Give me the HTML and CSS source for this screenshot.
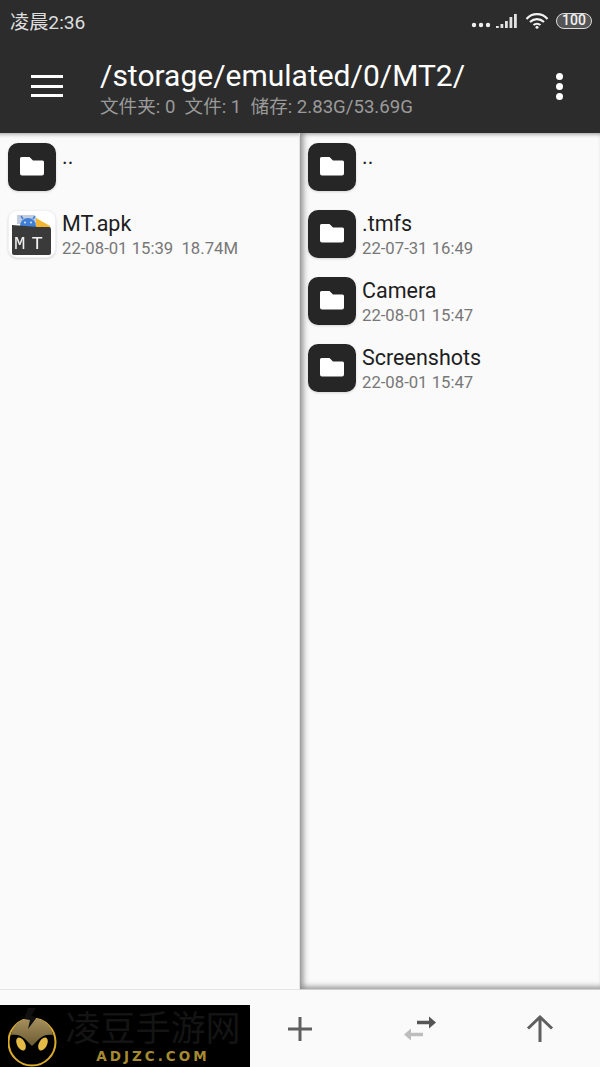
FILE: index.html
```html
<!DOCTYPE html>
<html lang="zh">
<head>
<meta charset="utf-8">
<title>MT2</title>
<link rel="stylesheet" href="styles.css">
</head>
<body>
<svg class="defs" width="0" height="0" aria-hidden="true">
  <symbol id="folder" viewBox="0 0 48 48">
    <rect width="48" height="48" rx="10" fill="#262626"/>
    <path d="M12 15.500a1.500 1.500 0 0 1 1.500-1.500h8l3.500 3.500h9.500a1.500 1.500 0 0 1 1.500 1.500v11.500a2 2 0 0 1-2 2h-20a2 2 0 0 1-2-2z" fill="#fff"/>
  </symbol>
</svg>
<div class="screen">
  <header class="header">
    <div class="status">
      <span class="clock">凌晨2:36</span>
      <div class="status-icons">
        <svg class="ic-dots" width="20" height="6" viewBox="0 0 20 6"><circle cx="3" cy="3" r="2.200" fill="#eee"/><circle cx="10" cy="3" r="2.200" fill="#eee"/><circle cx="17" cy="3" r="2.200" fill="#eee"/></svg>
        <svg class="ic-signal" width="22" height="16" viewBox="0 0 22 16"><path d="M1 13h2.800v2H1zM5.500 11h2.800v4H5.500zM10 8h2.800v7H10zM14.500 4h2.800v11h-2.800zM19 1h2.800v14H19z" fill="#e2e2e2"/></svg>
        <svg class="ic-wifi" width="24" height="17" viewBox="0 0 24 17" fill="none" stroke="#f2f2f2" stroke-width="2.200"><path d="M1.500 7C7 .5 17 .5 22.500 7"/><path d="M5 10c4-3.800 10-3.800 14 0"/><path d="M8.500 13c2-1.700 5-1.700 7 0"/><circle cx="12" cy="15.300" r="1.500" fill="#f2f2f2" stroke="none"/></svg>
        <span class="battery"><span class="battery-text">100</span></span>
      </div>
    </div>
    <div class="toolbar">
      <button class="menu" aria-label="菜单"><span></span><span></span><span></span></button>
      <div class="path">
        <div class="path-title">/storage/emulated/0/MT2/</div>
        <div class="path-info">文件夹: 0&nbsp; 文件: 1&nbsp; 储存: 2.83G/53.69G</div>
      </div>
      <div class="more"><span></span><span></span><span></span></div>
    </div>
  </header>

  <main class="panels">
    <section class="panel panel-left">
      <div class="row">
        <svg class="icon" width="48" height="48"><use href="#folder"/></svg>
        <div class="meta"><div class="name">..</div></div>
      </div>
      <div class="row">
        <svg class="icon" width="48" height="48" viewBox="0 0 48 48">
          <rect x="0.500" y="0.500" width="47" height="47" rx="9" fill="#fff" stroke="#f1f1f1"/>
          <path d="M9 5h17l8 9H9z" fill="#c3cddf"/>
          <path d="M28 8l14 8v6H28z" fill="#f2b632"/>
          <path d="M12 16a8 8 0 0 1 16 0v4H12z" fill="#3f7fd6"/>
          <path d="M15 9l-2-3M25 9l2-3" stroke="#3f7fd6" stroke-width="1.500"/>
          <circle cx="17" cy="12.500" r="1" fill="#dbe6f7"/><circle cx="23" cy="12.500" r="1" fill="#dbe6f7"/>
          <path d="M4 15l26 2h11a2 2 0 0 1 2 2v24a2 2 0 0 1-2 2H6a2 2 0 0 1-2-2z" fill="#3a3a3a"/>
          <text class="apk-letters" x="23.500" y="38.500" text-anchor="middle">MT</text>
        </svg>
        <div class="meta"><div class="name">MT.apk</div><div class="date">22-08-01 15:39&nbsp; 18.74M</div></div>
      </div>
    </section>
    <section class="panel panel-right">
      <div class="row">
        <svg class="icon" width="48" height="48"><use href="#folder"/></svg>
        <div class="meta"><div class="name">..</div></div>
      </div>
      <div class="row">
        <svg class="icon" width="48" height="48"><use href="#folder"/></svg>
        <div class="meta"><div class="name">.tmfs</div><div class="date">22-07-31 16:49</div></div>
      </div>
      <div class="row">
        <svg class="icon" width="48" height="48"><use href="#folder"/></svg>
        <div class="meta"><div class="name">Camera</div><div class="date">22-08-01 15:47</div></div>
      </div>
      <div class="row">
        <svg class="icon" width="48" height="48"><use href="#folder"/></svg>
        <div class="meta"><div class="name">Screenshots</div><div class="date">22-08-01 15:47</div></div>
      </div>
    </section>
  </main>

  <footer class="bottom">
    <div class="slot"></div>
    <div class="slot">
      <svg width="30" height="30" viewBox="0 0 30 30"><path d="M15 3v24M3 15h24" stroke="#5f5f5f" stroke-width="3" fill="none"/></svg>
    </div>
    <div class="slot">
      <svg width="40" height="30" viewBox="0 0 40 30">
        <path d="M17 8.500h13" stroke="#555" stroke-width="3.500"/><path d="M29 2.500l7 6-7 6z" fill="#555"/>
        <path d="M11 20.500h12" stroke="#bdbdbd" stroke-width="3.500"/><path d="M11 14.500l-7 6 7 6z" fill="#bdbdbd"/>
      </svg>
    </div>
    <div class="slot">
      <svg width="30" height="32" viewBox="0 0 30 32" fill="none" stroke="#5f5f5f" stroke-width="3"><path d="M15 29V4M3 15.500L15 4l12 11.500"/></svg>
    </div>
  </footer>

  <aside class="brand">
    <svg class="brand-mark" width="50" height="62" viewBox="0 0 50 62">
      <defs><linearGradient id="cap" x1="0" y1="0" x2="0" y2="1"><stop offset="0" stop-color="#a89160"/><stop offset="1" stop-color="#6a5a30"/></linearGradient></defs>
      <circle cx="24" cy="37" r="23.500" fill="#000" stroke="#d9a92c" stroke-width="2"/>
      <path d="M3 30C6 18 14 13 24 13s18 5 21 17c-5-1-10 0-14 4l-7 7-7-7c-4-4-9-5-14-4z" fill="url(#cap)"/>
      <path d="M28 3l-5 8 6 1-9 12 2-9-6-1 4-11z" fill="#101010"/>
      <ellipse cx="13" cy="39" rx="4" ry="7" transform="rotate(-28 13 39)" fill="#e3bb45"/>
      <ellipse cx="35" cy="39" rx="4" ry="7" transform="rotate(28 35 39)" fill="#e3bb45"/>
    </svg>
    <div class="brand-words">
      <div class="brand-name">凌豆手游网</div>
      <div class="brand-url">ADJZC.COM</div>
    </div>
  </aside>
</div>
</body>
</html>
```

FILE: styles.css
```css
* { box-sizing: border-box; }
html, body { margin: 0; padding: 0; }
body { font-family: Roboto, "Noto Sans CJK SC", sans-serif; background: #fafafa; }
.defs { position: absolute; }

.screen {
  position: relative;
  width: 600px;
  height: 1067px;
  display: flex;
  flex-direction: column;
  overflow: hidden;
}

/* status bar and toolbar */
.header { height: 133px; background: #2c2c2c; color: #fff; flex: none; }
.status {
  height: 44px;
  display: flex;
  align-items: center;
  justify-content: space-between;
  padding: 0 8px 3px 10px;
}
.clock { font-size: 19.200px; color: #dedede; }
.status-icons { display: flex; align-items: center; }
.ic-dots { margin-top: 8px; margin-right: 4px; }
.ic-signal { margin-top: 1px; margin-right: 8px; }
.ic-wifi { margin-top: -1px; margin-right: 7px; }
.battery {
  width: 36px;
  height: 16px;
  border: 1.500px solid #ddd;
  border-radius: 8px;
  background: #555;
  display: flex;
  align-items: center;
  justify-content: center;
}
.battery-text { font-size: 14px; line-height: 13px; color: #f2f2f2; font-weight: 500; }

.toolbar { height: 89px; display: flex; align-items: flex-start; }
.menu {
  width: 100px;
  height: 85px;
  padding: 31px 0 0 31px;
  margin: 0;
  border: 0;
  background: none;
  display: flex;
  flex-direction: column;
  gap: 6.500px;
}
.menu span { display: block; width: 32px; height: 3px; background: #fff; }
.path { flex: 1; padding-top: 13px; min-width: 0; }
.path-title { font-size: 30px; line-height: 38px; color: #fff; white-space: nowrap; }
.path-info { font-size: 18.600px; line-height: 24px; color: #9a9a9a; white-space: nowrap; }
.more {
  width: 80px;
  padding: 29px 0 0 36px;
  display: flex;
  flex-direction: column;
  gap: 3px;
}
.more span { display: block; width: 7px; height: 7px; border-radius: 50%; background: #fff; }

/* file panels */
.panels { flex: 1; display: flex; min-height: 0; background: #fafafa; }
.panel { width: 300px; padding-top: 10px; position: relative; }
.panel-left {
  border-right: 1px solid #e4e4e4;
  border-bottom: 1px solid #e4e4e4;
  box-shadow: inset 0 5px 4px -4px #999;
}
.panel-right {
  box-shadow: inset 7px 0 6px -4px #8a8a8a, inset 0 -6px 5px -3px #a8a8a8, inset 0 5px 4px -4px #999;
  border-bottom: 1px solid #cfcfcf;
}
.row { height: 67px; display: flex; padding-left: 8px; }
.icon { flex: none; width: 48px; height: 48px; filter: drop-shadow(0 1px 1px rgba(0,0,0,.15)); }
.apk-letters { font-family: "Liberation Mono", monospace; font-size: 19px; fill: #f1f1f1; letter-spacing: 6px; }
.meta { margin-left: 6px; min-width: 0; }
.name { font-size: 21.500px; line-height: 27px; color: #1e1e1e; white-space: nowrap; }
.date { font-size: 16.700px; line-height: 23px; color: #777; white-space: nowrap; }

/* bottom action bar */
.bottom { height: 77px; flex: none; display: flex; background: #fafafa; }
.slot { width: 120px; display: flex; align-items: center; justify-content: center; }
.slot:first-child { width: 240px; }

/* site stamp over the corner of the action bar */
.brand {
  position: absolute;
  left: 0;
  bottom: 0;
  width: 250px;
  height: 62px;
  background: #000;
  display: flex;
}
.brand-mark { flex: none; width: 50px; height: 62px; margin-left: 8px; }
.brand-words { margin-left: 7px; width: 176px; text-align: center; }
.brand-name { font-size: 35px; line-height: 37px; margin-top: 6px; color: #141414; white-space: nowrap; }
.brand-url { font-family: "DejaVu Sans", sans-serif; font-weight: 700; font-size: 13.500px; line-height: 14px; color: #a58a30; letter-spacing: 3px; margin-top: 1px; }
```
